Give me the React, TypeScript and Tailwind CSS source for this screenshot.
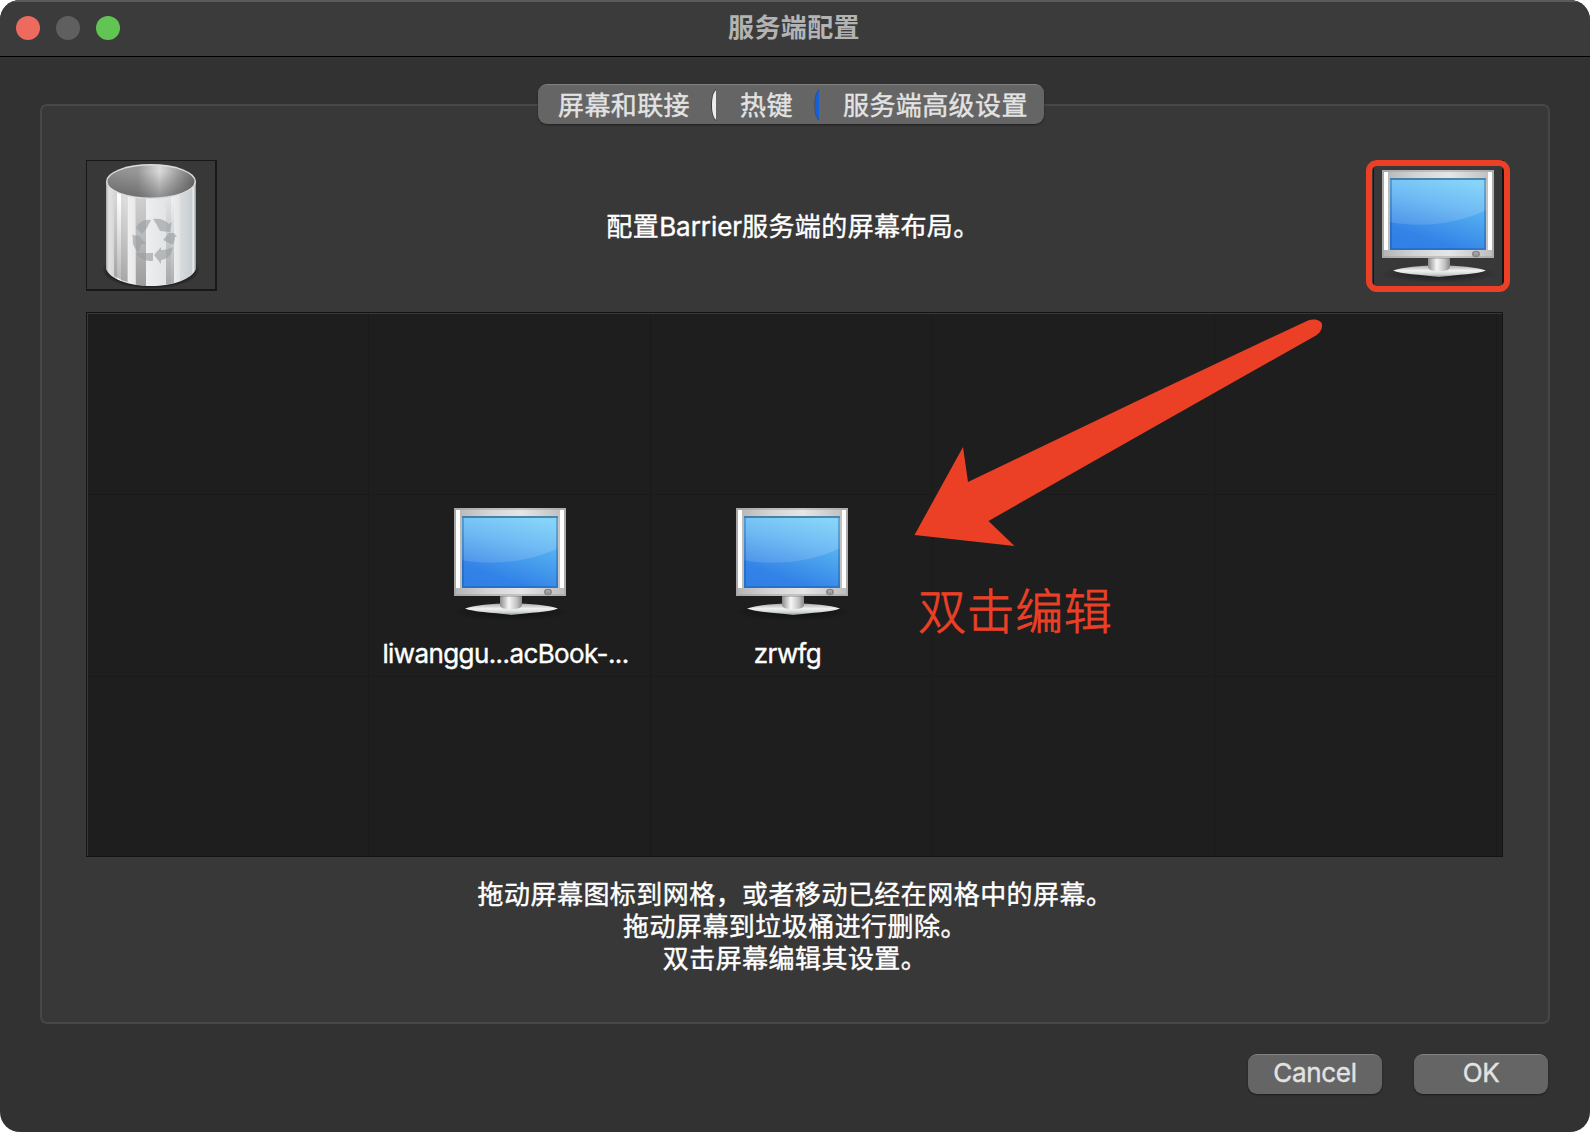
import React from "react";

function Monitor() {
  return (
    <svg width="128" height="128" viewBox="0 0 128 128" className="block shrink-0">
      <defs>
        <linearGradient id="frame" x1="0" x2="1">
          <stop offset="0" stopColor="#b4b4b4" />
          <stop offset=".3" stopColor="#d4d4d4" />
          <stop offset=".6" stopColor="#e6e6e6" />
          <stop offset="1" stopColor="#bcbcbc" />
        </linearGradient>
        <linearGradient id="screen" x1="0.3" y1="1" x2="0.75" y2="0">
          <stop offset="0" stopColor="#3080e6" />
          <stop offset=".15" stopColor="#3282e7" />
          <stop offset="1" stopColor="#6accf7" />
        </linearGradient>
        <linearGradient id="gloss" x1="0.2" y1="1" x2="0.7" y2="0">
          <stop offset="0" stopColor="#5399ea" />
          <stop offset=".5" stopColor="#70bbf4" />
          <stop offset="1" stopColor="#86d4f9" />
        </linearGradient>
        <linearGradient id="neck" x1="0" x2="1">
          <stop offset="0" stopColor="#8c8c8c" />
          <stop offset=".4" stopColor="#f6f6f6" />
          <stop offset=".75" stopColor="#c4c4c4" />
          <stop offset="1" stopColor="#8a8a8a" />
        </linearGradient>
        <linearGradient id="foot" x1="0" y1="0" x2="0" y2="1">
          <stop offset="0" stopColor="#a8aaaa" />
          <stop offset=".45" stopColor="#f1f2f2" />
          <stop offset=".75" stopColor="#d2d6d5" />
          <stop offset="1" stopColor="#8f9493" />
        </linearGradient>
        <radialGradient id="shade">
          <stop offset="0" stopColor="#000" stopOpacity=".55" />
          <stop offset="1" stopColor="#000" stopOpacity="0" />
        </radialGradient>
      </defs>
      <ellipse cx="65" cy="112" rx="60" ry="9" fill="url(#shade)" />
      <path d="M19 108.500C30 105 45 103.500 65 103.500s37 1.500 47 5c-8 3.500-28 4-47 6.500-19-2.500-38-3-46-6.500z" fill="url(#foot)" />
      <path d="M54 94h22v10c0 4-3 5-11 5s-11-1-11-5z" fill="url(#neck)" />
      <path d="M54 94h22v3H54z" fill="#666" opacity=".35" />
      <rect x="8" y="8" width="112" height="88" fill="url(#frame)" />
      <path d="M8 8h112v2H8zM8 94h112v2H8zM8 8h2v88H8zM118 8h2v88h-2z" fill="#989898" opacity=".45" />
      <path d="M10 10h4v78h-4zM114 10h4v78h-4z" fill="#fff" />
      <rect x="16" y="16" width="96" height="72" fill="url(#screen)" />
      <path d="M16 16h96v32C88 60 50 67 16 60z" fill="url(#gloss)" />
      <path d="M16 16h96v2H16zM16 18h2v70h-2zM110 18h2v70h-2zM18 86h92v2H18z" fill="#1a4f90" opacity=".35" />
      <path d="M16 16h96v2H16z" fill="#1b3a50" opacity=".3" />
      <ellipse cx="102" cy="92" rx="3.200" ry="2.500" fill="#c4c4c4" stroke="#858585" strokeWidth="1.500" />
      <path d="M99 92h6M102 92v3" stroke="#858585" strokeWidth="1.200" />
    </svg>
  );
}

function Trash() {
  return (
    <svg width="128" height="128" viewBox="0 0 128 128" className="block shrink-0">
      <defs>
        <linearGradient id="can" x1="0" x2="1">
          <stop offset="0" stopColor="#a8a8a8" />
          <stop offset=".03" stopColor="#e2e2e2" />
          <stop offset=".12" stopColor="#d2d2d2" />
          <stop offset=".125" stopColor="#fafafa" />
          <stop offset=".165" stopColor="#ffffff" />
          <stop offset=".17" stopColor="#dadada" />
          <stop offset=".24" stopColor="#dedede" />
          <stop offset=".245" stopColor="#f0f0f0" />
          <stop offset=".325" stopColor="#e8e8e8" />
          <stop offset=".33" stopColor="#cecece" />
          <stop offset=".44" stopColor="#cecece" />
          <stop offset=".445" stopColor="#eeeff0" />
          <stop offset=".72" stopColor="#e0e1e3" />
          <stop offset=".725" stopColor="#eff0f1" />
          <stop offset=".82" stopColor="#e2e4e6" />
          <stop offset=".825" stopColor="#d8dcde" />
          <stop offset=".95" stopColor="#c8ced2" />
          <stop offset=".97" stopColor="#eceeef" />
          <stop offset="1" stopColor="#8e9294" />
        </linearGradient>
        <linearGradient id="stripe" x1="0" y1="0" x2="0" y2="1">
          <stop offset="0" stopColor="#777" stopOpacity="0" />
          <stop offset="1" stopColor="#6b6b6b" stopOpacity=".5" />
        </linearGradient>
        <linearGradient id="hole" x1="0" x2="1">
          <stop offset="0" stopColor="#8c8c8c" />
          <stop offset=".35" stopColor="#989898" />
          <stop offset=".6" stopColor="#dadada" />
          <stop offset=".8" stopColor="#a2a2a2" />
          <stop offset="1" stopColor="#6c6c6c" />
        </linearGradient>
        <linearGradient id="depth" x1="0" y1="0" x2="0" y2="1">
          <stop offset=".2" stopColor="#444" stopOpacity="0" />
          <stop offset="1" stopColor="#444" stopOpacity=".5" />
        </linearGradient>
        <radialGradient id="floor">
          <stop offset=".75" stopColor="#000" stopOpacity=".75" />
          <stop offset="1" stopColor="#000" stopOpacity="0" />
        </radialGradient>
      </defs>
      <ellipse cx="64" cy="109" rx="49" ry="19" fill="url(#floor)" />
      <path d="M19 21v87c4 10 22 17 45 17s41-7 45-17V21z" fill="url(#can)" />
      <path d="M27 38h7.500v81l-7.500-4zM34.500 38h6v83l-6-2zM49 38h10v87l-10-1.500zM79 38h8v84l-8 1.500z" fill="url(#stripe)" />
      <ellipse cx="64" cy="20.500" rx="45" ry="17.500" fill="#dcdcdc" />
      <ellipse cx="64" cy="20.500" rx="43.500" ry="16" fill="url(#hole)" />
      <ellipse cx="64" cy="20.500" rx="43.500" ry="16" fill="url(#depth)" />
      <g fill="#9ba0a3" opacity=".65">
        <path d="M49 67c3-6 8-9 15-8l-4 8-5 6z" />
        <path d="M66 58c7-1 12 1 16 5l3-2-2 10-10-1c-2-4-4-8-7-12z" />
        <path d="M76 79l6-7h5l3 4h-2c0 3-1 6-2 8z" />
        <path d="M86 86c-1 7-4 12-12 13v4l-7-9 7-8v3c5 0 8-1 12-3z" />
        <path d="M66 92v8c-8 0-14-2-17-8z" />
        <path d="M45 74l7 1 7 8-5 0-2 8c-5-3-7-9-6-14z" />
      </g>
    </svg>
  );
}

function PushButton({ children }: { children: React.ReactNode }) {
  return (
    <button className="flex h-10 w-[134px] items-center justify-center rounded-[9px] border-t border-[#828282] bg-[#656565] pb-[4px] text-[26px] leading-none tracking-[-0.3px] text-[#e3e3e3] shadow-[0_1px_2px_rgba(0,0,0,0.45)] [-webkit-text-stroke:0.4px]">
      {children}
    </button>
  );
}

function Sliver({ fill, edge }: { fill: string; edge: string }) {
  return (
    <svg width="5" height="32" viewBox="0 0 5 32" className="block shrink-0">
      <path d="M5 0C2 3 .3 8 .3 16S2 29 5 32z" fill={edge} />
      <path d="M5 1C2 4 1 9 1 16s1 12 4 15z" fill={fill} />
    </svg>
  );
}

const cells = Array.from({ length: 15 }, (_, i) => i);
const names: Record<number, string> = { 6: "liwanggu...acBook-...", 7: "zrwfg" };

export default function App() {
  return (
    <div className="relative h-[1132px] w-[1590px] bg-white font-['Inter','Noto_Sans_CJK_SC',sans-serif]">
      <div className="flex h-full flex-col overflow-hidden rounded-[20px] bg-[#323232]">
        <header className="grid h-[57px] shrink-0 grid-cols-3 items-center border-t-2 border-b border-t-[#5b5b5b] border-b-black bg-[#3b3b3b] px-4">
          <div className="flex gap-4 pb-[2px]">
            <span className="size-6 rounded-full bg-[#ed6a5e]" />
            <span className="size-6 rounded-full bg-[#5f5f5f]" />
            <span className="size-6 rounded-full bg-[#61c554]" />
          </div>
          <h1 className="pr-[2px] pb-[3px] text-center text-[26px] leading-none font-bold tracking-[0.4px] text-[#b3b3b3]">服务端配置</h1>
        </header>

        <main className="mx-10 mt-[47px] flex h-[920px] shrink-0 flex-col rounded-[7px] border-2 border-[#474747] bg-[#383838]">
          <nav className="-mt-[22px] ml-[496px] flex h-10 w-[506px] shrink-0 items-center rounded-[9px] border-t border-[#828282] bg-[#656565] text-[26px] leading-none tracking-[0.4px] whitespace-nowrap text-[#e3e3e3] shadow-[0_1px_2px_rgba(0,0,0,0.45)] [-webkit-text-stroke:0.4px]">
            <span className="w-[173px] pt-[3px] pl-[20px]">屏幕和联接</span>
            <Sliver fill="#ececec" edge="#2c2c2c" />
            <span className="w-[98px] pt-[3px] pl-[24px]">热键</span>
            <Sliver fill="#1560d8" edge="#3d4a66" />
            <span className="pt-[3px] pl-[24px]">服务端高级设置</span>
          </nav>

          <section className="mx-11 mt-9 flex h-[132px] shrink-0 items-start justify-between">
            <div className="size-[131px] border-t border-r-2 border-b-2 border-l border-[#181818]">
              <Trash />
            </div>
            <p className="mt-[53px] mr-[4px] text-[26px] leading-[27px] tracking-[0.4px] text-white [-webkit-text-stroke:0.4px]">
              配置<span className="tracking-[-0.05px]">Barrier</span>服务端的屏幕布局。
            </p>
            <div className="relative size-[131px] border-t border-r-2 border-b-2 border-l border-[#141414]">
              <div className="pt-px">
                <Monitor />
              </div>
              <div className="absolute -top-px -left-[8px] h-[132px] w-[144px] rounded-[11px] border-6 border-[#eb4026]" />
            </div>
          </section>

          <section className="mx-11 mt-5 h-[545px] w-[1417px] shrink-0 border border-[#141414]">
            <div className="grid h-full grid-cols-[281px_repeat(4,282px)] grid-rows-[181px_182px_182px] overflow-hidden border-t border-l border-[#383838] bg-[#1e1e1e]">
              {cells.map((i) => (
                <div key={i} className="flex flex-col items-center border-r border-b border-[#1a1a1a]">
                  {names[i] && (
                    <>
                      <div className="mt-[5px]">
                        <Monitor />
                      </div>
                      <span className="mt-[10px] -ml-[8px] text-[26px] leading-8 tracking-[-0.6px] text-white [-webkit-text-stroke:0.4px]">
                        {names[i]}
                      </span>
                    </>
                  )}
                </div>
              ))}
            </div>
          </section>

          <p className="mt-[22px] text-center text-[26px] leading-8 tracking-[0.45px] text-white [-webkit-text-stroke:0.4px]">
            拖动屏幕图标到网格，或者移动已经在网格中的屏幕。
            <br />
            拖动屏幕到垃圾桶进行删除。
            <br />
            双击屏幕编辑其设置。
          </p>
        </main>

        <footer className="mt-[30px] mr-[42px] flex justify-end gap-8">
          <PushButton>Cancel</PushButton>
          <PushButton>OK</PushButton>
        </footer>
      </div>

      <svg className="absolute top-[310px] left-[900px]" width="440" height="260" viewBox="0 0 440 260">
        <path d="M14.500 225L63 137l5 35Q238 90 408 10.500C414 8 421 10 422 14C422.500 19 420 23 416 25.500Q252 118 88.500 211L114.500 236z" fill="#eb4026" />
      </svg>
      <span className="absolute top-[583px] left-[918px] text-[48px] leading-[58px] font-light tracking-[0.6px] whitespace-nowrap text-[#eb4026] [-webkit-text-stroke:0.8px]">双击编辑</span>
    </div>
  );
}
